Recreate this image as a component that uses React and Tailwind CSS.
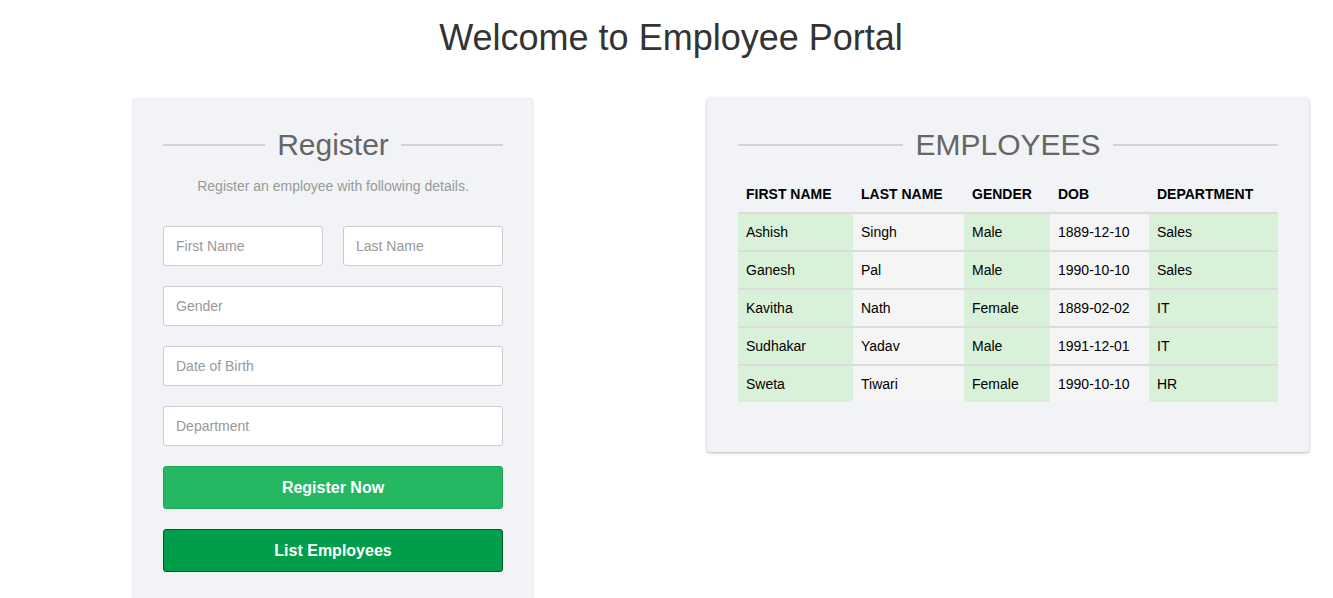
import React from 'react';

const employees = [
    { firstName: 'Ashish', lastName: 'Singh', gender: 'Male', dob: '1889-12-10', department: 'Sales' },
    { firstName: 'Ganesh', lastName: 'Pal', gender: 'Male', dob: '1990-10-10', department: 'Sales' },
    { firstName: 'Kavitha', lastName: 'Nath', gender: 'Female', dob: '1889-02-02', department: 'IT' },
    { firstName: 'Sudhakar', lastName: 'Yadav', gender: 'Male', dob: '1991-12-01', department: 'IT' },
    { firstName: 'Sweta', lastName: 'Tiwari', gender: 'Female', dob: '1990-10-10', department: 'HR' },
];

function Heading({ children }) {
    return (
        <div className="flex items-center gap-3">
            <div className="flex-1 h-[2px] bg-[#d3d3d3]" />
            <h2 className="text-[30px] leading-[36px] text-[#666]">{children}</h2>
            <div className="flex-1 h-[2px] bg-[#d3d3d3]" />
        </div>
    );
}

function Field({ placeholder, className = '' }) {
    return (
        <input
            type="text"
            placeholder={placeholder}
            className={`h-10 px-3 bg-white border border-[#ccc] rounded-[3px] text-sm text-[#333] placeholder:text-[#999] outline-none ${className}`}
        />
    );
}

export default function App() {
    const green = 'bg-[#d9f0d9]';
    const grey = 'bg-[#f5f5f5]';

    return (
        <div className="min-h-[598px] bg-white font-['Liberation_Sans',Arial,sans-serif] text-[#333] overflow-hidden">
            <h1 className="pt-[18px] pl-[9px] text-center text-[36px] leading-[40px] text-[#333]">Welcome to Employee Portal</h1>

            <div className="mt-10 flex items-start gap-[173px] pl-[132px]">
                {/* register form */}
                <div className="w-[402px] h-[520px] shrink-0 bg-[#f2f3f6] rounded-[3px] border border-[#eceef1] px-[30px] pt-[28px]">
                    <Heading>Register</Heading>
                    <p className="mt-[13px] text-center text-sm leading-5 text-[#999]">Register an employee with following details.</p>
                    <form className="mt-[30px] flex flex-col gap-5" onSubmit={(e) => e.preventDefault()}>
                        <div className="flex gap-5">
                            <Field placeholder="First Name" className="w-[160px]" />
                            <Field placeholder="Last Name" className="w-[160px]" />
                        </div>
                        <Field placeholder="Gender" className="w-full" />
                        <Field placeholder="Date of Birth" className="w-full" />
                        <Field placeholder="Department" className="w-full" />
                        <button type="submit" className="h-[43px] w-full bg-[#25b862] border border-[#1fa557] rounded-[3px] text-white font-bold text-base">
                            Register Now
                        </button>
                        <button type="button" className="h-[43px] w-full bg-[#009d4b] border border-[#00582a] rounded-[3px] text-white font-bold text-base">
                            List Employees
                        </button>
                    </form>
                </div>

                {/* employee list */}
                <div className="w-[602px] shrink-0 bg-[#f2f3f6] rounded-[3px] shadow-[0_1px_3px_rgba(0,0,0,0.3)] px-[31px] pt-[29px] pb-[50px]">
                    <Heading>EMPLOYEES</Heading>
                    <table className="mt-[13px] w-full border-collapse text-sm text-black">
                        <thead>
                            <tr className="h-[37px] border-b-2 border-[#dcdcdc]">
                                <th className="w-[115px] px-2 text-left text-sm font-bold">FIRST NAME</th>
                                <th className="w-[111px] px-2 text-left text-sm font-bold">LAST NAME</th>
                                <th className="w-[86px] px-2 text-left text-sm font-bold">GENDER</th>
                                <th className="w-[99px] px-2 text-left text-sm font-bold">DOB</th>
                                <th className="px-2 text-left text-sm font-bold">DEPARTMENT</th>
                            </tr>
                        </thead>
                        <tbody>
                            {employees.map((emp, i) => (
                                <tr
                                    key={emp.firstName}
                                    className={`${i === employees.length - 1 ? 'h-[37px]' : 'h-[38px]'} ${i > 0 ? 'border-t-2 border-[#dcdcdc]' : ''}`}
                                >
                                    <td className={`px-2 ${green}`}>{emp.firstName}</td>
                                    <td className={`px-2 ${grey}`}>{emp.lastName}</td>
                                    <td className={`px-2 ${green}`}>{emp.gender}</td>
                                    <td className={`px-2 ${grey}`}>{emp.dob}</td>
                                    <td className={`px-2 ${green}`}>{emp.department}</td>
                                </tr>
                            ))}
                        </tbody>
                    </table>
                </div>
            </div>
        </div>
    );
}
